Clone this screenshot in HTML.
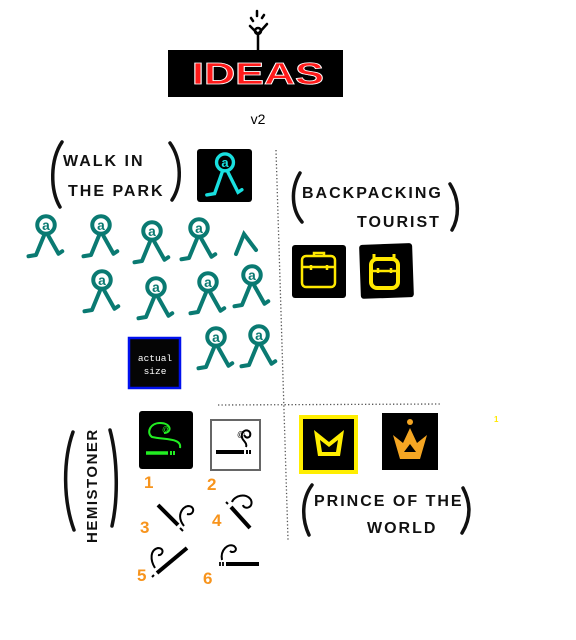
<!DOCTYPE html>
<html><head><meta charset="utf-8"><style>
html,body{margin:0;padding:0;background:#fff;width:576px;height:640px;overflow:hidden}
svg{display:block}
.h{font-family:"Liberation Sans",sans-serif;font-weight:bold;fill:#111;font-size:16px;letter-spacing:3px}
.o{font-family:"Liberation Sans",sans-serif;fill:#f7941d;font-size:17px;font-weight:bold}
</style></head><body>
<svg width="576" height="640" viewBox="0 0 576 640" xmlns="http://www.w3.org/2000/svg">
<defs>
<g id="w" fill="none" stroke="#0a7a72" stroke-width="3.2" stroke-linecap="round" stroke-linejoin="round">
<circle cx="0" cy="-12" r="7"/>
<text x="0" y="-8" text-anchor="middle" font-family="Liberation Sans" font-weight="bold" font-size="11" fill="#0a7a72" stroke="none">a</text>
<path d="M-1 -5 L-8 12 L-14 13 M1 -5 L10 11 L13 9"/>
</g>
<g id="cg" fill="none" stroke="#000" stroke-width="3" stroke-linecap="butt">
<path d="M-22 0 H6" stroke-width="4"/><path d="M9 -2 V2 M12 -2 V2" stroke-width="2"/>
<path d="M8 -5 C10 -10 2 -12 4 -18 C6 -24 14 -22 12 -16 C10 -13 6 -15 7 -17" stroke-width="2"/>
</g>
</defs>

<g stroke="#000" stroke-width="2.5" fill="none" stroke-linecap="round">
<path d="M251 18 l2 3 M257 11 v5 M264 15 l-2 3"/>
<circle cx="258" cy="31" r="3"/>
<path d="M250 26 L258 34 L267 24 M258 34 V50"/>
</g>
<rect x="168" y="50" width="175" height="47" fill="#000"/>
<text x="258" y="84" text-anchor="middle" font-family="Liberation Sans" font-weight="bold" font-size="31" fill="#ff1a1a" stroke="#fff" stroke-width="0.8" textLength="132" lengthAdjust="spacingAndGlyphs">IDEAS</text>
<text x="258" y="124" text-anchor="middle" font-family="Liberation Sans" font-size="14" fill="#000">v2</text>

<path d="M276 150 L288 540" stroke="#555" stroke-width="1.3" stroke-dasharray="1.3 2.2" fill="none"/>
<path d="M218 405 L440 404" stroke="#555" stroke-width="1.3" stroke-dasharray="1.3 2.2" fill="none"/>

<g fill="none" stroke="#111" stroke-width="3.5" stroke-linecap="round">
<path d="M62 142 C50 160 50 190 60 207"/>
<path d="M170 143 C182 160 182 185 172 200"/>
</g>
<text class="h" x="63" y="166" style="letter-spacing:2px">WALK IN</text>
<text class="h" x="68" y="196" style="letter-spacing:2px">THE PARK</text>
<rect x="197" y="149" width="55" height="53" rx="3" fill="#000"/>
<g transform="translate(225,178) scale(1.3)" fill="none" stroke="#19e0e0" stroke-width="2.6" stroke-linecap="round"><circle cx="0" cy="-12" r="6.5"/><text x="0" y="-8.5" text-anchor="middle" font-family="Liberation Sans" font-weight="bold" font-size="10" fill="#19e0e0" stroke="none">a</text><path d="M-2 -5 L-8 12 L-14 13 M2 -5 L10 11 L13 9"/></g>

<use href="#w" transform="translate(46,240) scale(1.25)"/>
<use href="#w" transform="translate(101,240) scale(1.25)"/>
<use href="#w" transform="translate(152,246) scale(1.25)"/>
<use href="#w" transform="translate(199,243) scale(1.25)"/>
<path d="M236 254 L244 234 L256 250" stroke="#0a7a72" stroke-width="4" fill="none" stroke-linecap="round"/>
<use href="#w" transform="translate(102,295) scale(1.25)"/>
<use href="#w" transform="translate(156,302) scale(1.25)"/>
<use href="#w" transform="translate(208,297) scale(1.25)"/>
<use href="#w" transform="translate(252,290) scale(1.25)"/>
<use href="#w" transform="translate(216,352) scale(1.25)"/>
<use href="#w" transform="translate(259,350) scale(1.25)"/>

<rect x="129" y="338" width="51" height="50" fill="#050505" stroke="#0010ee" stroke-width="2.5"/>
<text x="155" y="361" text-anchor="middle" font-family="Liberation Mono" font-size="9.5" fill="#fff">actual</text>
<text x="155" y="374" text-anchor="middle" font-family="Liberation Mono" font-size="9.5" fill="#fff">size</text>

<g fill="none" stroke="#111" stroke-width="3.5" stroke-linecap="round">
<path d="M300 173 C290 190 292 210 302 222"/>
<path d="M450 184 C460 200 459 218 452 230"/>
</g>
<text class="h" x="302" y="198" style="letter-spacing:2px">BACKPACKING</text>
<text class="h" x="357" y="227" style="letter-spacing:2px">TOURIST</text>
<rect x="292" y="245" width="54" height="53" rx="3" fill="#000"/>
<rect x="360" y="244" width="53" height="54" rx="3" fill="#000" transform="rotate(-2 386 271)"/>
<g fill="none" stroke="#ffe800" stroke-width="2.5">
<rect x="302" y="256" width="33" height="31" rx="4"/>
<path d="M314 256 v-3 h10 v3 M302 267 h33 M311 265 v5 M327 265 v5"/>
<path d="M374 260 v-6 M394 260 v-6" stroke-width="3"/>
<rect x="371" y="259" width="27" height="29" rx="6" stroke-width="4"/>
<path d="M371 271 h27 M378 268 v5 M391 268 v5"/>
</g>

<rect x="301" y="417" width="55" height="55" fill="#000" stroke="#ffee00" stroke-width="4"/>
<path d="M314 430 L329 442 L344 430 L340 456 H318 Z M320 440 L329 447 L338 440 L336 452 H322 Z" fill="#ffee00" fill-rule="evenodd"/>
<rect x="382" y="413" width="56" height="57" fill="#000"/>
<circle cx="410" cy="422" r="3" fill="#f5a623"/>
<path d="M393 435 L403 443 L410 428 L417 443 L427 435 L420 459 H400 Z M404 452 L410 444 L416 452 Z" fill="#f5a623" fill-rule="evenodd"/>
<text x="494" y="422" font-family="Liberation Sans" font-size="8" fill="#ffe800" font-weight="bold">1</text>
<g fill="none" stroke="#111" stroke-width="3.5" stroke-linecap="round">
<path d="M312 485 C301 500 302 520 309 535"/>
<path d="M463 488 C472 505 470 520 462 533"/>
</g>
<text class="h" x="314" y="506" style="letter-spacing:2px">PRINCE OF THE</text>
<text class="h" x="367" y="533" style="letter-spacing:2px">WORLD</text>

<g fill="none" stroke="#111" stroke-width="3.5" stroke-linecap="round">
<path d="M73 432 C63 460 63 500 74 530"/>
<path d="M110 430 C118 460 118 500 112 526"/>
</g>
<text class="h" transform="translate(97,543) rotate(-90)" style="letter-spacing:1.5px;font-size:15px">HEMISTONER</text>
<rect x="139" y="411" width="54" height="58" rx="3" fill="#000"/>
<g fill="none" stroke="#22ee22" stroke-width="2"><path d="M146 453 H168" stroke-width="3.5"/><path d="M171 451 v4 M174 451 v4"/>
<path d="M180 448 C182 438 166 440 152 437 C146 433 150 423 160 423 C172 423 172 433 164 433"/><text x="162" y="432" font-size="8" fill="#22ee22" stroke="none" font-family="Liberation Sans">@</text></g>
<rect x="211" y="420" width="49" height="50" fill="#fff" stroke="#666" stroke-width="2"/>
<use href="#cg" x="238" y="452"/>
<text x="237" y="437" font-size="8" font-family="Liberation Sans">@</text>

<text class="o" x="144" y="488" font-size="13">1</text>
<text class="o" x="207" y="490">2</text>
<text class="o" x="140" y="533">3</text>
<text class="o" x="212" y="526">4</text>
<text class="o" x="137" y="581">5</text>
<text class="o" x="203" y="584">6</text>

<g stroke="#000" fill="none" stroke-linecap="butt">
<path d="M158 505 L178 525" stroke-width="4"/><path d="M180 528 l3 3" stroke-width="2"/>
<path d="M184 526 C176 516 182 507 188 506 C196 506 194 516 187 514" stroke-width="2"/>
<path d="M250 528 L231 507" stroke-width="4"/><path d="M228 504 l-2 -2" stroke-width="2"/>
<path d="M232 502 C234 496 246 492 251 500 C254 508 244 510 243 505" stroke-width="2"/>
<path d="M157 573 L187 548" stroke-width="4"/><path d="M154 575 l-2 2" stroke-width="2"/>
<path d="M155 568 C150 560 150 550 158 548 C165 548 163 556 158 555" stroke-width="2"/>
<path d="M226 564 H259" stroke-width="4"/><path d="M220 562 v4 M223 562 v4" stroke-width="1.8"/>
<path d="M222 560 C220 550 228 543 234 546 C239 550 233 554 230 551" stroke-width="2"/>
</g>
</svg>
</body></html>
